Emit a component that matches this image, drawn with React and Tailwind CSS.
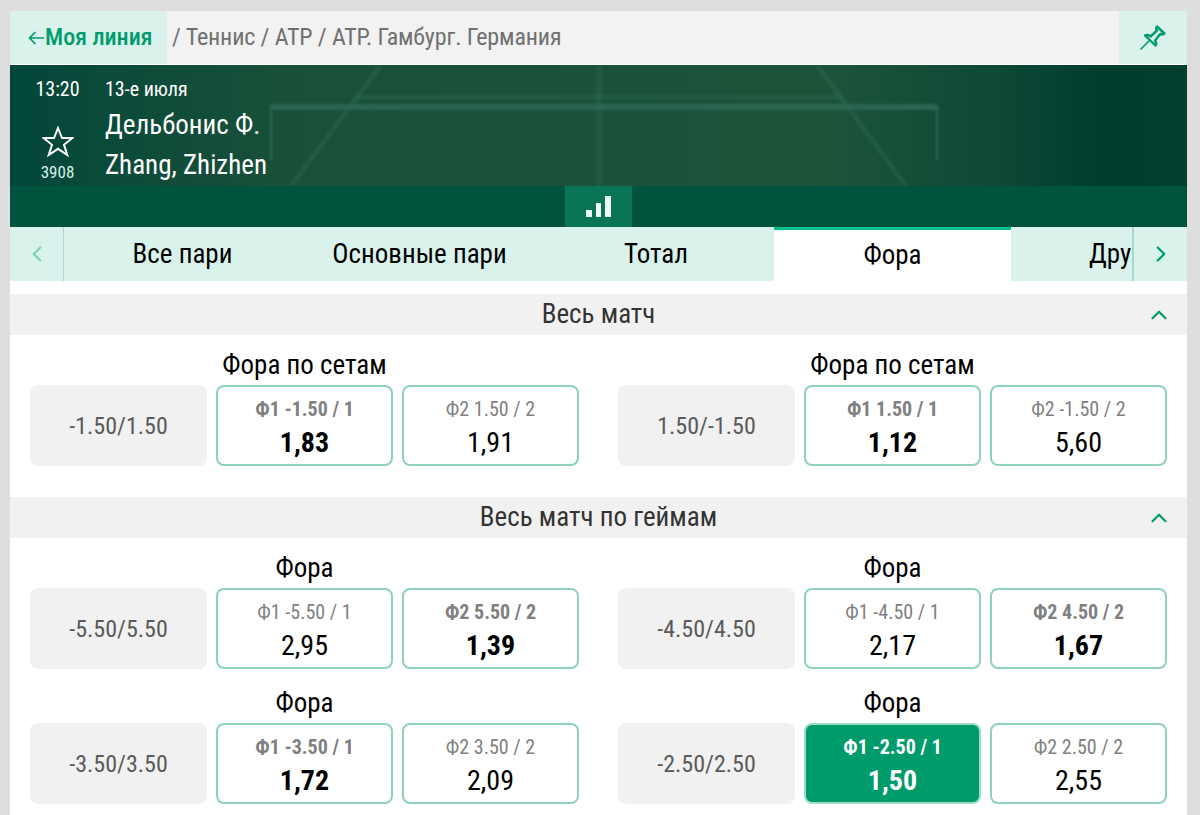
import React from "react";
import { ChevronLeft, ChevronRight, ChevronUp } from "lucide-react";

const narrow = "font-['Roboto_Condensed','Liberation_Sans_Narrow',Roboto,sans-serif] [font-stretch:75%]";

function Cell({ label, value, strong, active }) {
  return (
    <div className={`flex flex-col items-center h-[81px] rounded-lg border-2 ${active ? "bg-[#009b6b] border-[#9fdcc8] text-white" : "bg-white border-[#8ed1bf] text-black"}`}>
      <div className={`mt-[10px] h-[24px] text-[20px] leading-[24px] ${strong ? "font-bold" : ""} ${active ? "text-white" : "text-[#808080]"}`}>{label}</div>
      <div className={`mt-[4px] text-[28px] leading-[36px] ${strong ? "font-bold" : ""}`}>{value}</div>
    </div>
  );
}

function Market({ title, line, a, b }) {
  return (
    <div>
      <div className="grid grid-cols-[177px_177px_177px] gap-[9px]">
        <div />
        <div className="h-[34px] text-center text-[27px] leading-[28px] text-black whitespace-nowrap">{title}</div>
        <div />
      </div>
      <div className="grid grid-cols-[177px_177px_177px] gap-[9px]">
        <div className="flex items-center justify-center h-[81px] rounded-lg bg-[#f1f1f1] text-[24px] text-[#5a5a5a]">{line}</div>
        <Cell {...a} />
        <Cell {...b} />
      </div>
    </div>
  );
}

function Section({ title, children }) {
  return (
    <div>
      <div className="relative flex items-center justify-center h-[41px] bg-[#f1f1f1] text-[27px] text-[#333333]">
        {title}
        <ChevronUp className="absolute right-[15px] top-[8px] text-[#009b6b]" size={26} strokeWidth={2} />
      </div>
      {children}
    </div>
  );
}

export default function App() {
  return (
    <div className={`h-[815px] overflow-hidden bg-[#dedede] pt-[11px] pl-[10px] ${narrow}`}>
      <div className="w-[1177px] h-[804px] bg-white">
        {/* breadcrumbs */}
        <div className="flex h-[53px] bg-[#f2f2f2] text-[24px] leading-[53px]">
          <div className="flex items-center gap-[1px] w-[157px] bg-[#d9f2eb] pl-[18px] text-[#009b6b] font-medium whitespace-nowrap">
            <svg width="16" height="14" viewBox="0 0 16 14" fill="none" stroke="#009b6b" strokeWidth="1.7">
              <path d="M16 7H1.5M7.5 1L1.5 7L7.5 13" />
            </svg>
            Моя линия
          </div>
          <div className="flex-1 pl-[5px] text-[#707070] tracking-[-0.13px]">/ Теннис / ATP / ATP. Гамбург. Германия</div>
          <div className="flex items-center justify-center w-[68px] bg-[#d9f2eb]">
            <svg width="28" height="28" viewBox="0 0 28 28" fill="none" stroke="#009b6b" strokeWidth="2.4" strokeLinecap="round" strokeLinejoin="round">
              <path d="M2 25L10 17" strokeWidth="1.6" />
              <path d="M6 11.5C8 10.5 10 11 11.5 12.5L18 6.5C16.8 4.8 17 3.5 18 2.5L25.5 9.5C24.5 10.5 23 10.8 21.5 9.8L16 16.5C17.3 18 17.5 20 16.5 21.5Z" />
            </svg>
          </div>
        </div>

        {/* match header */}
        <div className="relative mt-px h-[121px] overflow-hidden bg-[linear-gradient(90deg,#02473a_0%,#1a5039_24%,#1d5339_70%,#0e4836_84%,#003d2f_93%,#023f31_100%)] text-white">
          <svg className="absolute inset-0 blur-[0.8px]" width="1177" height="121" fill="none" stroke="#2f6b58" strokeOpacity="0.7">
            <path d="M261 95V42H927V95" strokeWidth="3" />
            <path d="M261 42H927" strokeWidth="6" />
            <path d="M345 32H832" strokeWidth="4" strokeOpacity="0.4" />
            <path d="M371 0L281 121M807 0L896 121" strokeWidth="5" strokeOpacity="0.4" />
            <path d="M589 0V121" strokeWidth="7" strokeOpacity="0.35" />
          </svg>
          <div className="relative flex">
            <div className="flex flex-col items-center w-[95px] pt-[11px]">
              <div className="text-[20px] leading-[26px]">13:20</div>
              <svg className="mt-[24px]" width="32" height="31" viewBox="0 0 32 31" fill="none" stroke="white" strokeWidth="2">
                <path d="M16 2L20 12H30.5L22 18.8L25.3 29L16 22.8L6.7 29L10 18.8L1.5 12H12Z" />
              </svg>
              <div className="mt-[5px] text-[17px] leading-[20px] text-[#d9f2eb]">3908</div>
            </div>
            <div className="pt-[11px]">
              <div className="text-[20px] leading-[26px]">13-е июля</div>
              <div className="mt-[5px] text-[27px] leading-[36px]">Дельбонис Ф.</div>
              <div className="mt-[4px] text-[27px] leading-[36px]">Zhang, Zhizhen</div>
            </div>
          </div>
        </div>

        {/* stats strip */}
        <div className="flex justify-center h-[41px] bg-[#00533d]">
          <div className="flex items-center justify-center w-[67px] bg-[#0a7457]">
            <svg width="25" height="21" viewBox="0 0 25 21" fill="#eef8f5">
              <rect x="0" y="14" width="6" height="7" />
              <rect x="10" y="7" width="5" height="14" />
              <rect x="19" y="0" width="6" height="21" />
            </svg>
          </div>
        </div>

        {/* tabs */}
        <div className="flex h-[54px] bg-[#d9f2eb] text-[27px] text-black">
          <div className="flex items-center justify-center w-[54px] border-r border-[#a6d9cb]">
            <ChevronLeft className="text-[#7fcfb5]" size={26} strokeWidth={2} />
          </div>
          <div className="flex items-center justify-center w-[237px]">Все пари</div>
          <div className="flex items-center justify-center w-[237px]">Основные пари</div>
          <div className="flex items-center justify-center w-[236px]">Тотал</div>
          <div className="flex items-center justify-center w-[237px] bg-white border-t-[3px] border-[#00c08b]">Фора</div>
          <div className="flex-1 overflow-hidden whitespace-nowrap pl-[78px] leading-[54px]">Другие</div>
          <div className="flex items-center justify-center w-[55px] border-l-2 border-[#a6d9cb]">
            <ChevronRight className="text-[#009b6b]" size={26} strokeWidth={2} />
          </div>
        </div>

        <div className="h-[13px]" />

        <Section title="Весь матч">
          <div className="grid grid-cols-2 gap-x-[39px] px-[20px] pt-[16px] pb-[31px]">
            <Market title="Фора по сетам" line="-1.50/1.50" a={{ label: "Ф1 -1.50 / 1", value: "1,83", strong: true }} b={{ label: "Ф2 1.50 / 2", value: "1,91" }} />
            <Market title="Фора по сетам" line="1.50/-1.50" a={{ label: "Ф1 1.50 / 1", value: "1,12", strong: true }} b={{ label: "Ф2 -1.50 / 2", value: "5,60" }} />
          </div>
        </Section>

        <Section title="Весь матч по геймам">
          <div className="grid grid-cols-2 gap-x-[39px] gap-y-[20px] px-[20px] pt-[16px]">
            <Market title="Фора" line="-5.50/5.50" a={{ label: "Ф1 -5.50 / 1", value: "2,95" }} b={{ label: "Ф2 5.50 / 2", value: "1,39", strong: true }} />
            <Market title="Фора" line="-4.50/4.50" a={{ label: "Ф1 -4.50 / 1", value: "2,17" }} b={{ label: "Ф2 4.50 / 2", value: "1,67", strong: true }} />
            <Market title="Фора" line="-3.50/3.50" a={{ label: "Ф1 -3.50 / 1", value: "1,72", strong: true }} b={{ label: "Ф2 3.50 / 2", value: "2,09" }} />
            <Market title="Фора" line="-2.50/2.50" a={{ label: "Ф1 -2.50 / 1", value: "1,50", strong: true, active: true }} b={{ label: "Ф2 2.50 / 2", value: "2,55" }} />
          </div>
        </Section>
      </div>
    </div>
  );
}
